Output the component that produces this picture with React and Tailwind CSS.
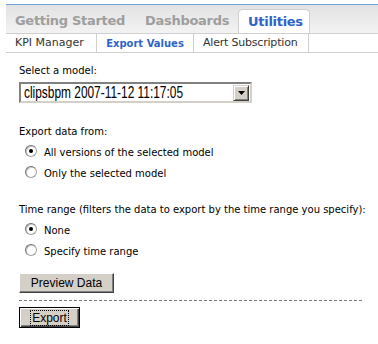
import React, { useState } from "react";

const verdana = { fontFamily: '"DejaVu Sans", Verdana, sans-serif' };
const arial = { fontFamily: '"Liberation Sans", Arial, sans-serif' };

const Radio = ({ checked }) => (
  <span className="relative inline-block w-[12px] h-[12px] rounded-full border border-[#a0a0a0] border-t-[#707070] border-l-[#707070] bg-white shadow-[inset_1px_1px_0_#c8c8c8]">
    {checked && (
      <span className="absolute left-[3px] top-[3px] w-[4px] h-[4px] rounded-full bg-black" />
    )}
  </span>
);

const RadioRow = ({ label, checked, onClick }) => (
  <div className="flex items-center h-[21px] pl-[6px] cursor-pointer" onClick={onClick}>
    <div className="-mt-[4px] flex">
      <Radio checked={checked} />
    </div>
    <span className="ml-[7px] text-[10px] text-black whitespace-nowrap">{label}</span>
  </div>
);

const App = () => {
  const [source, setSource] = useState("all");
  const [range, setRange] = useState("none");

  return (
    <div className="w-[378px] h-[344px] bg-white overflow-hidden" style={verdana}>
      {/* main tabs */}
      <div className="pt-[4px] pl-[6px]">
        <div className="h-[29px] border-t border-[#6fa3dc] bg-gradient-to-b from-[#e2e2e2] to-[#f3f3f3] flex items-end pl-[9px] whitespace-nowrap">
          <div className="h-[24px] flex items-center text-[13px] font-bold text-[#9e9e9e] tracking-[-0.3px]">
            Getting Started
          </div>
          <div className="h-[24px] flex items-center ml-[20px] text-[13px] font-bold text-[#9e9e9e] tracking-[-0.3px]">
            Dashboards
          </div>
          <div className="h-[24px] ml-[9px] w-[72px] pl-[9px] bg-white border border-b-0 border-[#cfcfcf] rounded-t-[5px] flex items-center text-[13px] font-bold text-[#2f64c8] tracking-[-0.3px]">
            Utilities
          </div>
        </div>
        {/* sub tabs */}
        <div className="h-[20px] flex border-t border-b border-[#cfcfcf] text-[11px] whitespace-nowrap">
          <div className="w-[91px] flex items-center pl-[9px] border-r border-[#cfcfcf] text-[#333]">KPI Manager</div>
          <div className="w-[97px] flex items-center justify-center border-r border-[#cfcfcf] bg-white text-[10px] font-bold text-[#2f64c8]">
            Export Values
          </div>
          <div className="w-[115px] flex items-center pl-[9px] border-r border-[#cfcfcf] text-[#333] tracking-[-0.2px]">
            Alert Subscription
          </div>
        </div>
      </div>

      {/* form */}
      <div className="pl-[19px] pt-[11px] text-[10px] text-black">
        <div className="leading-[14px]">Select a model:</div>
        <div className="mt-[4px] w-[233px] h-[21px] flex items-center border-2 border-t-[#808080] border-l-[#808080] border-r-[#d4d0c8] border-b-[#d4d0c8] bg-white" style={arial}>
          <span className="flex-1 min-w-0 overflow-hidden pl-[3px] whitespace-nowrap">
            <span className="inline-block origin-left scale-x-[0.7] text-[17px] leading-[17px] text-black">
              clipsbpm 2007-11-12 11:17:05
            </span>
          </span>
          <span className="shrink-0 w-[16px] h-[16px] mr-[1px] bg-[#d4d0c8] border border-t-[#d4d0c8] border-l-[#d4d0c8] border-r-[#404040] border-b-[#404040] shadow-[inset_1px_1px_0_#fff,inset_-1px_-1px_0_#808080] flex items-center justify-center">
            <svg width="7" height="4" viewBox="0 0 7 4"><path d="M0 0h7L3.5 4z" fill="#000" /></svg>
          </span>
        </div>

        <div className="mt-[22px] leading-[14px]">Export data from:</div>
        <div className="mt-[3px]">
          <RadioRow label="All versions of the selected model" checked={source === "all"} onClick={() => setSource("all")} />
          <RadioRow label="Only the selected model" checked={source === "only"} onClick={() => setSource("only")} />
        </div>

        <div className="mt-[19px] leading-[14px] whitespace-nowrap">
          Time range (filters the data to export by the time range you specify):
        </div>
        <div className="mt-[3px]">
          <RadioRow label="None" checked={range === "none"} onClick={() => setRange("none")} />
          <RadioRow label="Specify time range" checked={range === "specify"} onClick={() => setRange("specify")} />
        </div>

        <button
          className="mt-[11px] w-[95px] h-[20px] bg-[#d4d0c8] border border-t-white border-l-white border-r-[#404040] border-b-[#404040] shadow-[inset_-1px_-1px_0_#808080] text-[12px] text-black flex items-center justify-center"
          style={arial}
        >
          Preview Data
        </button>
        <div className="mt-[7px] w-[343px] border-t border-dashed border-[#777]" />
        <button
          className="mt-[6px] w-[61px] h-[21px] bg-[#d4d0c8] border border-black shadow-[inset_1px_1px_0_#fff,inset_-1px_-1px_0_#404040,inset_-2px_-2px_0_#808080] text-[12px] text-black flex items-center justify-center"
          style={arial}
        >
          <span className="outline outline-1 outline-dotted outline-black px-[1px] leading-[14px]">Export</span>
        </button>
      </div>
    </div>
  );
};

export default App;
